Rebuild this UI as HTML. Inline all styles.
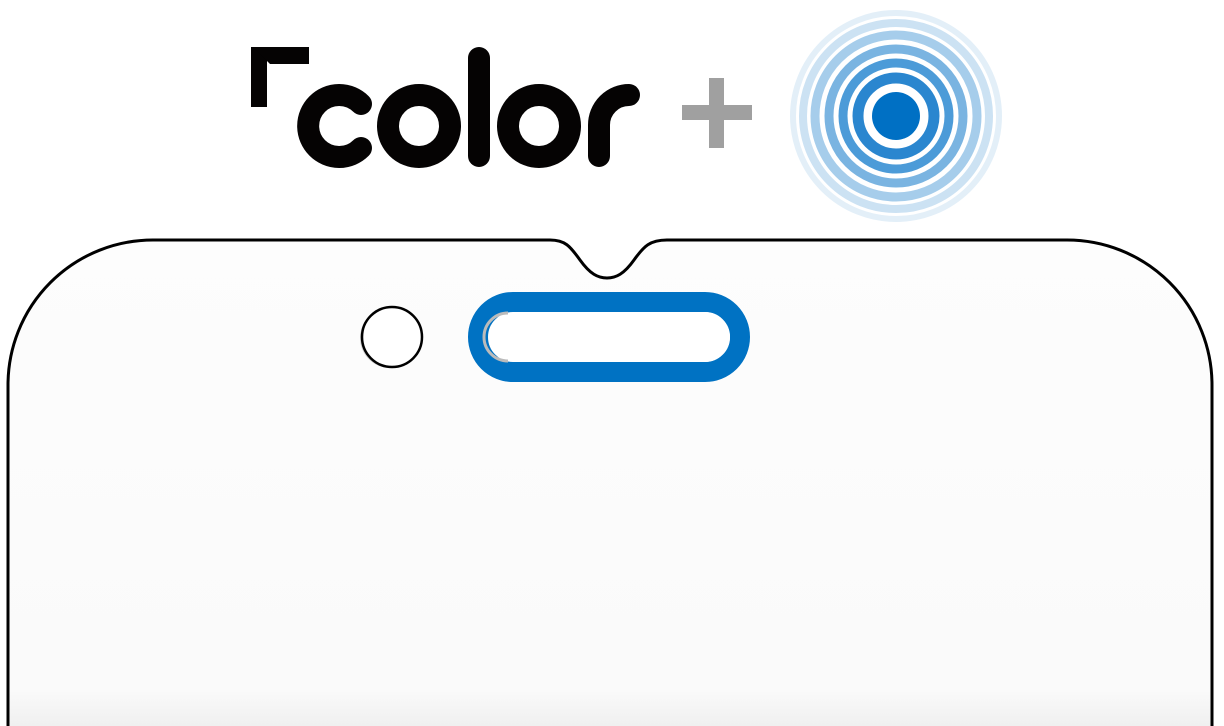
<!DOCTYPE html>
<html><head><style>
html,body{margin:0;padding:0;background:#fff;width:1224px;height:726px;overflow:hidden}
</style></head><body>
<svg width="1224" height="726" viewBox="0 0 1224 726" xmlns="http://www.w3.org/2000/svg">
<defs>
<linearGradient id="bg" x1="0" y1="0" x2="0" y2="1">
<stop offset="0" stop-color="#fdfdfd"/><stop offset="0.9" stop-color="#fafafa"/><stop offset="1" stop-color="#ececec"/>
</linearGradient>
</defs>
<path d="M8 740 L8 385 A145 145 0 0 1 153 240 L550 240 C565 240 570 246 580 260 C590 274 598 278 607 278 C616 278 624 274 634 260 C644 246 650 240 667 240 L1067 240 A145 145 0 0 1 1212 385 L1212 740 Z" fill="url(#bg)" stroke="#000" stroke-width="3"/>
<circle cx="390" cy="338" r="30" fill="#d0d0d0"/>
<circle cx="392" cy="337" r="30" fill="#fff" stroke="#000" stroke-width="2.5"/>
<rect x="478" y="302" width="262" height="70" rx="35" fill="#fff" stroke="#0072c3" stroke-width="20"/>
<path d="M508 313 A24 24 0 0 0 508 361" fill="none" stroke="#bbb" stroke-width="3"/>
<rect x="506" y="312" width="224" height="50" rx="25" fill="#fff"/>
<g fill="#050303">
<rect x="251" y="47" width="16" height="60"/>
<polygon points="253,47 309,47 309,64 270,64"/>
</g>
<g fill="none" stroke="#050303" stroke-width="22" stroke-linecap="round">
<path d="M361 104 A31 31 0 1 0 361 148"/>
<circle cx="419" cy="126" r="31"/>
<line x1="479" y1="58" x2="479" y2="156"/>
<circle cx="539" cy="126" r="31"/>
<path d="M599 156 L599 125 A30 30 0 0 1 629 95"/>
</g>
<g fill="#a0a0a0">
<rect x="709" y="78" width="15" height="70"/>
<rect x="682" y="105" width="70" height="15"/>
</g>
<g fill="none">
<circle cx="896" cy="116" r="103" stroke="#e3eff8" stroke-width="6"/>
<circle cx="896" cy="116" r="93" stroke="#cce2f3" stroke-width="8"/>
<circle cx="896" cy="116" r="81" stroke="#a6cdeb" stroke-width="9"/>
<circle cx="896" cy="116" r="67" stroke="#7ab4e1" stroke-width="9"/>
<circle cx="896" cy="116" r="53" stroke="#4c9bd8" stroke-width="9"/>
<circle cx="896" cy="116" r="38" stroke="#2a86cf" stroke-width="11"/>
</g>
<circle cx="896" cy="116" r="24" fill="#0070c4"/>
</svg>
</body></html>
